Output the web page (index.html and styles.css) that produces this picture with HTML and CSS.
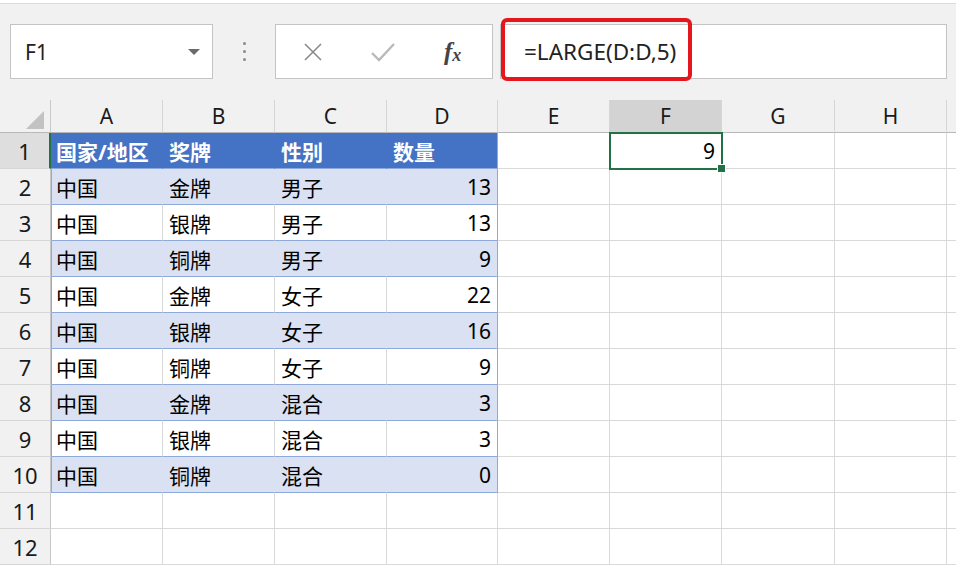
FILE: index.html
```html
<!DOCTYPE html>
<html lang="zh-CN">
<head>
    <meta charset="UTF-8">
    <meta name="viewport" content="width=device-width, initial-scale=1.0">
    <title>LARGE</title>
    <link rel="stylesheet" href="styles.css">
</head>
<body>

    <!-- Traka za formule -->
    <div class="toolbar">
        <div class="name-box">
            <span>F1</span>
            <span class="caret"></span>
        </div>
        <div class="dots"><i></i><i></i><i></i></div>
        <div class="btn-box">
            <svg class="ico" width="22" height="22" viewBox="0 0 22 22"><path d="M3 3 L19 19 M19 3 L3 19" stroke="#8a8a8a" stroke-width="1.6" fill="none"/></svg>
            <svg class="ico" width="26" height="22" viewBox="0 0 26 22"><path d="M2 12 L9 19 L24 3" stroke="#b9b9b9" stroke-width="2.4" fill="none"/></svg>
            <span class="fx"><i>f</i><sub>x</sub></span>
        </div>
        <div class="formula">
            <span>=LARGE(D:D,5)</span>
            <div class="mark"></div>
        </div>
    </div>

    <!-- Radni list -->
    <div class="sheet">
        <div class="ch corner"><span class="tri"></span></div>
        <div class="ch">A</div><div class="ch">B</div><div class="ch">C</div><div class="ch">D</div>
        <div class="ch">E</div><div class="ch sel">F</div><div class="ch">G</div><div class="ch">H</div><div class="ch"></div>

        <div class="rh sel">1</div>
        <div class="c t hd first">国家/地区</div><div class="c t hd">奖牌</div><div class="c t hd">性别</div><div class="c t hd last">数量</div>
        <div class="c"></div><div class="c active num">9</div><div class="c"></div><div class="c"></div><div class="c"></div>

        <div class="rh">2</div>
        <div class="c t band first">中国</div><div class="c t band">金牌</div><div class="c t band">男子</div><div class="c t band last num">13</div>
        <div class="c"></div><div class="c"></div><div class="c"></div><div class="c"></div><div class="c"></div>

        <div class="rh">3</div>
        <div class="c t first">中国</div><div class="c t">银牌</div><div class="c t">男子</div><div class="c t last num">13</div>
        <div class="c"></div><div class="c"></div><div class="c"></div><div class="c"></div><div class="c"></div>

        <div class="rh">4</div>
        <div class="c t band first">中国</div><div class="c t band">铜牌</div><div class="c t band">男子</div><div class="c t band last num">9</div>
        <div class="c"></div><div class="c"></div><div class="c"></div><div class="c"></div><div class="c"></div>

        <div class="rh">5</div>
        <div class="c t first">中国</div><div class="c t">金牌</div><div class="c t">女子</div><div class="c t last num">22</div>
        <div class="c"></div><div class="c"></div><div class="c"></div><div class="c"></div><div class="c"></div>

        <div class="rh">6</div>
        <div class="c t band first">中国</div><div class="c t band">银牌</div><div class="c t band">女子</div><div class="c t band last num">16</div>
        <div class="c"></div><div class="c"></div><div class="c"></div><div class="c"></div><div class="c"></div>

        <div class="rh">7</div>
        <div class="c t first">中国</div><div class="c t">铜牌</div><div class="c t">女子</div><div class="c t last num">9</div>
        <div class="c"></div><div class="c"></div><div class="c"></div><div class="c"></div><div class="c"></div>

        <div class="rh">8</div>
        <div class="c t band first">中国</div><div class="c t band">金牌</div><div class="c t band">混合</div><div class="c t band last num">3</div>
        <div class="c"></div><div class="c"></div><div class="c"></div><div class="c"></div><div class="c"></div>

        <div class="rh">9</div>
        <div class="c t first">中国</div><div class="c t">银牌</div><div class="c t">混合</div><div class="c t last num">3</div>
        <div class="c"></div><div class="c"></div><div class="c"></div><div class="c"></div><div class="c"></div>

        <div class="rh">10</div>
        <div class="c t band first">中国</div><div class="c t band">铜牌</div><div class="c t band">混合</div><div class="c t band last num">0</div>
        <div class="c"></div><div class="c"></div><div class="c"></div><div class="c"></div><div class="c"></div>

        <div class="rh">11</div>
        <div class="c"></div><div class="c"></div><div class="c"></div><div class="c"></div>
        <div class="c"></div><div class="c"></div><div class="c"></div><div class="c"></div><div class="c"></div>

        <div class="rh">12</div>
        <div class="c"></div><div class="c"></div><div class="c"></div><div class="c"></div>
        <div class="c"></div><div class="c"></div><div class="c"></div><div class="c"></div><div class="c"></div>
    </div>

</body>
</html>
```

FILE: styles.css
```css
body {
    margin: 0;
    padding: 0;
    background-color: #ffffff;
    color: #000;
    font-family: "Noto Sans", "Noto Sans CJK SC", sans-serif;
    width: 956px;
    height: 570px;
    overflow: hidden;
}

/* Traka za formule */
.toolbar {
    height: 97px;
    margin-top: 3px;
    border-top: 1px solid #dcdcdc;
    background-color: #f1f1f1;
    display: flex;
    align-items: flex-start;
    padding-top: 20px;
    box-sizing: border-box;
}

.name-box {
    margin-left: 10px;
    width: 203px;
    height: 55px;
    box-sizing: border-box;
    background-color: #fff;
    border: 1px solid #c4c4c4;
    display: flex;
    align-items: center;
    justify-content: space-between;
    padding: 0 12px 0 14px;
    font-size: 21px;
    color: #222;
}

.caret {
    width: 0;
    height: 0;
    border-left: 6px solid transparent;
    border-right: 6px solid transparent;
    border-top: 6px solid #6b6b6b;
}

.dots {
    width: 62px;
    height: 55px;
    display: flex;
    flex-direction: column;
    align-items: center;
    justify-content: center;
    gap: 5px;
}

.dots i {
    width: 3px;
    height: 3px;
    border-radius: 50%;
    background-color: #8a8a8a;
}

.btn-box {
    width: 218px;
    height: 55px;
    box-sizing: border-box;
    background-color: #fff;
    border: 1px solid #c4c4c4;
    display: flex;
    align-items: center;
    padding-left: 26px;
    gap: 46px;
}

.fx {
    font-family: "Liberation Serif", serif;
    font-size: 25px;
    color: #444;
    margin-left: 2px;
}

.fx i {
    font-weight: bold;
}

.fx sub {
    font-style: italic;
    font-weight: bold;
    font-size: 18px;
    vertical-align: -1px;
}

.formula {
    position: relative;
    margin-left: 7px;
    width: 447px;
    height: 55px;
    box-sizing: border-box;
    background-color: #fff;
    border: 1px solid #c4c4c4;
    display: flex;
    align-items: center;
    padding-left: 23px;
    font-size: 22.5px;
    color: #222;
}

.mark {
    position: absolute;
    left: 0;
    top: -7px;
    width: 191px;
    height: 63px;
    box-sizing: border-box;
    border: 4px solid #e5161c;
    border-radius: 6px;
}

/* Radni list */
.sheet {
    display: grid;
    grid-template-columns: 51px 112px 112px 112px 111px 112px 112px 113px 112px 1fr;
    grid-template-rows: 33px repeat(12, 36px);
    font-size: 21px;
}

.ch {
    background-color: #f1f1f1;
    border-right: 1px solid #d6d6d6;
    border-bottom: 1px solid #b8b8b8;
    display: flex;
    align-items: center;
    justify-content: center;
    color: #1a1a1a;
}

.ch.sel {
    background-color: #d3d3d3;
}

.corner {
    position: relative;
    border-right: 1px solid #c8c8c8;
}

.tri {
    position: absolute;
    right: 6px;
    bottom: 3px;
    width: 0;
    height: 0;
    border-left: 18px solid transparent;
    border-bottom: 18px solid #c2c2c2;
}

.rh {
    background-color: #f1f1f1;
    border-right: 1px solid #c8c8c8;
    border-bottom: 1px solid #d6d6d6;
    display: flex;
    align-items: center;
    justify-content: center;
    color: #1a1a1a;
    font-size: 22px;
}

.rh.sel {
    background-color: #dedede;
    border-right: 2px solid #217346;
}

.c {
    border-right: 1px solid #d9d9d9;
    border-bottom: 1px solid #d9d9d9;
    display: flex;
    align-items: center;
    padding: 0 6px;
    white-space: nowrap;
    overflow: visible;
}

.num {
    justify-content: flex-end;
}

/* Tabela */
.t {
    border-bottom-color: #8ea9db;
}

.t.hd {
    background-color: #4472c4;
    border-right-color: #4472c4;
    color: #fff;
    font-weight: bold;
}

.t.band {
    background-color: #d9e1f2;
    border-right-color: #d9e1f2;
}

.t.first {
    box-shadow: inset 1px 0 #8ea9db;
    padding-left: 5px;
}

.t.hd.first {
    box-shadow: none;
}

.t.last {
    border-right-color: #8ea9db;
}

.active {
    position: relative;
    outline: 2px solid #217346;
    outline-offset: -1px;
    z-index: 2;
}

.active::after {
    content: "";
    position: absolute;
    right: -5px;
    bottom: -5px;
    width: 7px;
    height: 7px;
    background-color: #217346;
    border: 1px solid #fff;
}
```
